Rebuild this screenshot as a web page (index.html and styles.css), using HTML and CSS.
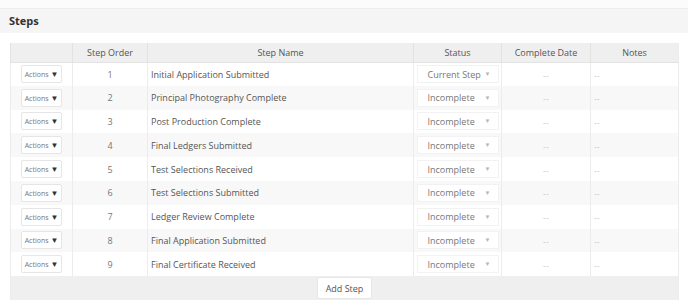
FILE: index.html
```html
<!DOCTYPE html>
<html>
<head>
    <title>Steps</title>
    <link rel="stylesheet" href="styles.css">
</head>
<body>
    <div class="top-strip"></div>

    <div class="panel">
        <div class="panel-heading">Steps</div>

        <div class="panel-body">
            <table class="steps-table">
                <thead>
                    <tr>
                        <th class="col-actions"></th>
                        <th class="col-order">Step Order</th>
                        <th class="col-name">Step Name</th>
                        <th class="col-status">Status</th>
                        <th class="col-date">Complete Date</th>
                        <th class="col-notes">Notes</th>
                    </tr>
                </thead>
                <tbody id="stepRows"></tbody>
                <tfoot>
                    <tr>
                        <td colspan="6" class="table-footer">
                            <button class="add-step">Add Step</button>
                        </td>
                    </tr>
                </tfoot>
            </table>
        </div>
    </div>

    <script>
        const steps = [
            { order: 1, name: 'Initial Application Submitted', status: 'Current Step' },
            { order: 2, name: 'Principal Photography Complete', status: 'Incomplete' },
            { order: 3, name: 'Post Production Complete', status: 'Incomplete' },
            { order: 4, name: 'Final Ledgers Submitted', status: 'Incomplete' },
            { order: 5, name: 'Test Selections Received', status: 'Incomplete' },
            { order: 6, name: 'Test Selections Submitted', status: 'Incomplete' },
            { order: 7, name: 'Ledger Review Complete', status: 'Incomplete' },
            { order: 8, name: 'Final Application Submitted', status: 'Incomplete' },
            { order: 9, name: 'Final Certificate Received', status: 'Incomplete' }
        ];

        const stepRows = document.getElementById('stepRows');

        steps.forEach(function(step) {
            const row = document.createElement('tr');
            row.innerHTML = `
                <td class="col-actions"><span class="actions-btn">Actions <span class="caret">&#9660;</span></span></td>
                <td class="col-order">${step.order}</td>
                <td class="col-name">${step.name}</td>
                <td class="col-status"><span class="status-select">${step.status}<span class="select-arrow">&#9660;</span></span></td>
                <td class="col-date"><span class="dash">--</span></td>
                <td class="col-notes"><span class="dash">--</span></td>`;
            stepRows.appendChild(row);
        });
    </script>
</body>
</html>
```

FILE: styles.css
```css
* {
    margin: 0;
    padding: 0;
    box-sizing: border-box;
    font-family: "Open Sans", sans-serif;
}

body {
    background-color: #ffffff;
    color: #555555;
}

.top-strip {
    height: 9px;
    background-color: #fbfbfb;
    border-bottom: 1px solid #ececec;
}

.panel-heading {
    height: 24px;
    padding: 0 9px;
    line-height: 23px;
    background-color: #f5f5f5;
    font-size: 11px;
    font-weight: bold;
    color: #333333;
}

.panel-body {
    padding: 10px 10px 0 10px;
}

.steps-table {
    width: 668px;
    border-collapse: collapse;
    table-layout: fixed;
    font-size: 9px;
}

.steps-table th {
    height: 19px;
    background-color: #efefef;
    font-weight: normal;
    color: #555555;
    text-align: center;
    border-left: 1px solid #e2e2e2;
    border-bottom: 1px solid #e2e2e2;
}

.steps-table td {
    height: 23.8px;
    border-left: 1px solid #ececec;
    vertical-align: middle;
}

.steps-table tbody tr:nth-child(even) td {
    background-color: #f8f8f8;
}

.col-actions { width: 62px; text-align: center; }
.col-order { width: 75px; text-align: center; color: #777777; }
.col-name { width: 266px; padding-left: 3px; text-align: left; }
.col-status { width: 88px; text-align: center; }
.col-date { width: 89px; text-align: center; }
.col-notes { width: 88px; padding-left: 3px; text-align: left; }

th.col-name { padding-left: 0; text-align: center; }
th.col-notes { padding-left: 0; text-align: center; }

.dash {
    font-size: 8px;
    letter-spacing: 0.5px;
    color: #bbbbbb;
}

.steps-table td:last-child,
.steps-table th:last-child {
    border-right: 1px solid #ececec;
}

.actions-btn {
    display: inline-block;
    width: 41px;
    height: 18px;
    line-height: 16px;
    border: 1px solid #e6e6e6;
    border-radius: 2px;
    background-color: #ffffff;
    font-size: 7px;
    color: #777777;
}

.caret {
    font-size: 8px;
    color: #333333;
}

.status-select {
    display: flex;
    align-items: center;
    justify-content: space-between;
    width: 82px;
    height: 18px;
    margin: 0 auto;
    padding: 0 7px 0 10px;
    border: 1px solid #f2f2f2;
    background-color: #ffffff;
    font-size: 9px;
    color: #777777;
}

.select-arrow {
    font-size: 6px;
    color: #b5b5b5;
}

.table-footer {
    height: 22px;
    background-color: #efefef;
    text-align: center;
    border-left: none;
}

.add-step {
    width: 55px;
    height: 22px;
    border: 1px solid #e6e6e6;
    border-radius: 2px;
    background-color: #ffffff;
    font-size: 9px;
    color: #555555;
    cursor: pointer;
}
```
